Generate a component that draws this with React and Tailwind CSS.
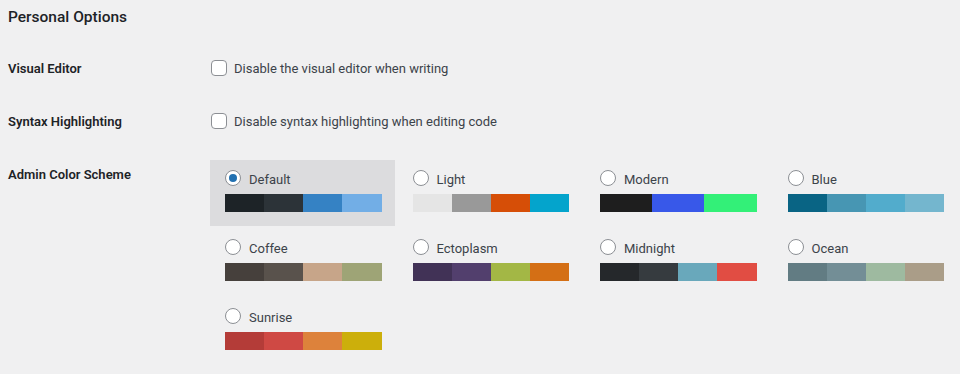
import React, { useState } from "react";

const SCHEMES = [
  { name: "Default", colors: ["#1d2327", "#2c3338", "#3582c4", "#72aee6"] },
  { name: "Light", colors: ["#e5e5e5", "#999999", "#d64e07", "#04a4cc"] },
  { name: "Modern", colors: ["#1e1e1e", "#3858e9", "#33f078"] },
  { name: "Blue", colors: ["#096484", "#4796b3", "#52accc", "#74b6ce"] },
  { name: "Coffee", colors: ["#46403c", "#59524c", "#c7a589", "#9ea476"] },
  { name: "Ectoplasm", colors: ["#413256", "#523f6d", "#a3b745", "#d46f15"] },
  { name: "Midnight", colors: ["#25282b", "#363b3f", "#69a8bb", "#e14d43"] },
  { name: "Ocean", colors: ["#627c83", "#738e96", "#9ebaa0", "#aa9d88"] },
  { name: "Sunrise", colors: ["#b43c38", "#cf4944", "#dd823b", "#ccaf0b"] },
];

function Checkbox({ label }) {
  const [checked, setChecked] = useState(false);
  return (
    <label className="flex items-center cursor-pointer">
      <span
        onClick={() => setChecked(c => !c)}
        className="w-4 h-4 rounded-[4px] border border-[#8c8f94] bg-white shrink-0"
      />
      <span className="ml-[7px] translate-y-px text-[13px] text-[#3c434a]">{label}</span>
    </label>
  );
}

export default function App() {
  const [scheme, setScheme] = useState("Default");

  return (
    <div
      className="w-[960px] h-[374px] bg-[#f0f0f1] text-[#1d2327] pl-2 overflow-hidden"
      style={{ fontFamily: 'Roboto, "Noto Sans", sans-serif' }}
    >
      <h2 className="pt-[5px] h-[29px] leading-6 text-[15.5px] font-medium">Personal Options</h2>

      <div className="flex items-center h-6 mt-[27px]">
        <div className="w-[203px] translate-y-px text-[13px] font-semibold">Visual Editor</div>
        <Checkbox label="Disable the visual editor when writing" />
      </div>

      <div className="flex items-center h-6 mt-[29px]">
        <div className="w-[203px] translate-y-px text-[13px] font-semibold">Syntax Highlighting</div>
        <Checkbox label="Disable syntax highlighting when editing code" />
      </div>

      <div className="flex mt-[27px]">
        <div className="w-[202px] mt-[3px] leading-6 text-[13px] font-semibold">Admin Color Scheme</div>
        <div className="grid grid-cols-[repeat(4,184.5px)] gap-x-[3px] gap-y-[3px]">
          {SCHEMES.map(s => {
            const active = scheme === s.name;
            return (
              <div
                key={s.name}
                onClick={() => setScheme(s.name)}
                className={`pl-[15px] pr-[13px] pt-[5px] pb-[14px] cursor-pointer ${active ? "bg-[#dcdcde]" : ""}`}
              >
                <div className="flex items-center h-[26px]">
                  <span className="w-4 h-4 rounded-full border border-[#8c8f94] bg-white flex items-center justify-center shrink-0">
                    {active && <span className="w-2 h-2 rounded-full bg-[#2271b1]" />}
                  </span>
                  <span className="ml-2 translate-y-[1.5px] text-[13px] text-[#3c434a]">{s.name}</span>
                </div>
                <div className="flex h-[18px] mt-[3px]">
                  {s.colors.map(c => (
                    <div key={c} className="flex-1" style={{ backgroundColor: c }} />
                  ))}
                </div>
              </div>
            );
          })}
        </div>
      </div>
    </div>
  );
}
